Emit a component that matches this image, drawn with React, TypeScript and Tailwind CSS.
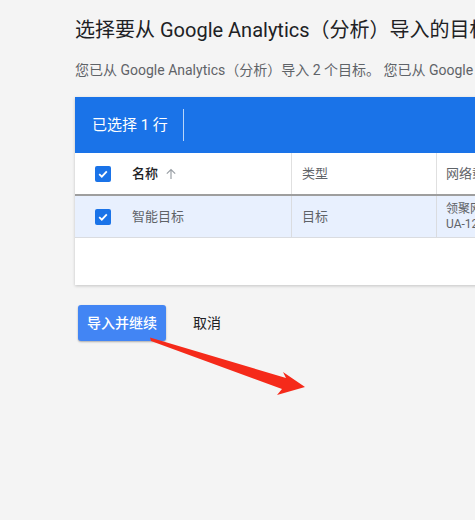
import React from "react";

const font = { fontFamily: '"Roboto", "Noto Sans CJK SC", sans-serif' };

function Check() {
  return (
    <div className="w-4 h-4 rounded-[2px] bg-[#1a73e8] flex items-center justify-center">
      <svg width="12" height="12" viewBox="0 0 12 12">
        <path d="M2.2 6.2 L4.8 8.7 L9.8 3.4" stroke="#fff" strokeWidth="1.8" fill="none" />
      </svg>
    </div>
  );
}

export default function App() {
  return (
    <div className="relative w-[475px] h-[520px] bg-[#f4f4f4] overflow-hidden" style={font}>
      <div className="pl-[75px] pt-4 flex flex-col">
        <div className="text-[20px] leading-[28px] text-[#202124] whitespace-nowrap">
          选择要从 Google Analytics（分析）导入的目标
        </div>
        <div className="mt-4 text-[14px] leading-[20px] text-[#5f6368] whitespace-nowrap">
          您已从 Google Analytics（分析）导入 2 个目标。 您已从 Google Analytics（分析）导入
        </div>
        <div className="mt-[17px] w-[640px] bg-white shadow-[0_1px_3px_rgba(0,0,0,0.2)]">
          <div className="h-[56px] bg-[#1a73e8] flex items-center pl-[17px]">
            <span className="text-white text-[15px]">已选择 1 行</span>
            <div className="ml-[15px] w-px h-[32px] bg-white/70" />
          </div>
          <div className="flex h-[43px] border-b-2 border-[#9e9e9e] text-[13px]">
            <div className="w-[217px] flex items-center pl-[20px] border-r border-[#e0e0e0]">
              <Check />
              <span className="ml-[21px] font-medium text-[#202124]">名称</span>
              <svg className="ml-[7px]" width="12" height="12" viewBox="0 0 12 12">
                <path d="M6 11 V1.5 M1.8 5.7 L6 1.5 L10.2 5.7" stroke="#9aa0a6" strokeWidth="1.2" fill="none" />
              </svg>
            </div>
            <div className="w-[145px] flex items-center pl-[10px] border-r border-[#e0e0e0] text-[#5f6368]">类型</div>
            <div className="flex-1 flex items-center pl-[9px] text-[#5f6368]">网络载体</div>
          </div>
          <div className="flex h-[42px] bg-[#e8f0fe] border-b border-[#dadce0] text-[13px] text-[#5f6368]">
            <div className="w-[217px] flex items-center pl-[20px] border-r border-[#dadce0]">
              <Check />
              <span className="ml-[21px]">智能目标</span>
            </div>
            <div className="w-[145px] flex items-center pl-[10px] border-r border-[#dadce0]">目标</div>
            <div className="flex-1 flex flex-col justify-center pl-[9px] text-[12px] leading-[15px]">
              <span>领聚网络</span>
              <span>UA-12345678-1</span>
            </div>
          </div>
          <div className="h-[47px]" />
        </div>
        <div className="mt-[20px] ml-[3px] flex items-center">
          <button className="h-[36px] px-[9px] rounded-[3px] bg-[#4285f4] text-white text-[14px] font-medium shadow-[0_1px_2px_rgba(0,0,0,0.3)]">
            导入并继续
          </button>
          <span className="ml-[27px] text-[14px] text-[#202124]">取消</span>
        </div>
      </div>
      <svg className="absolute left-0 top-0" width="475" height="520" viewBox="0 0 475 520">
        <polygon points="150,337.5 286,378 283,372 305,387 277,395 282,389 151,341" fill="#f52a1a" />
      </svg>
    </div>
  );
}
